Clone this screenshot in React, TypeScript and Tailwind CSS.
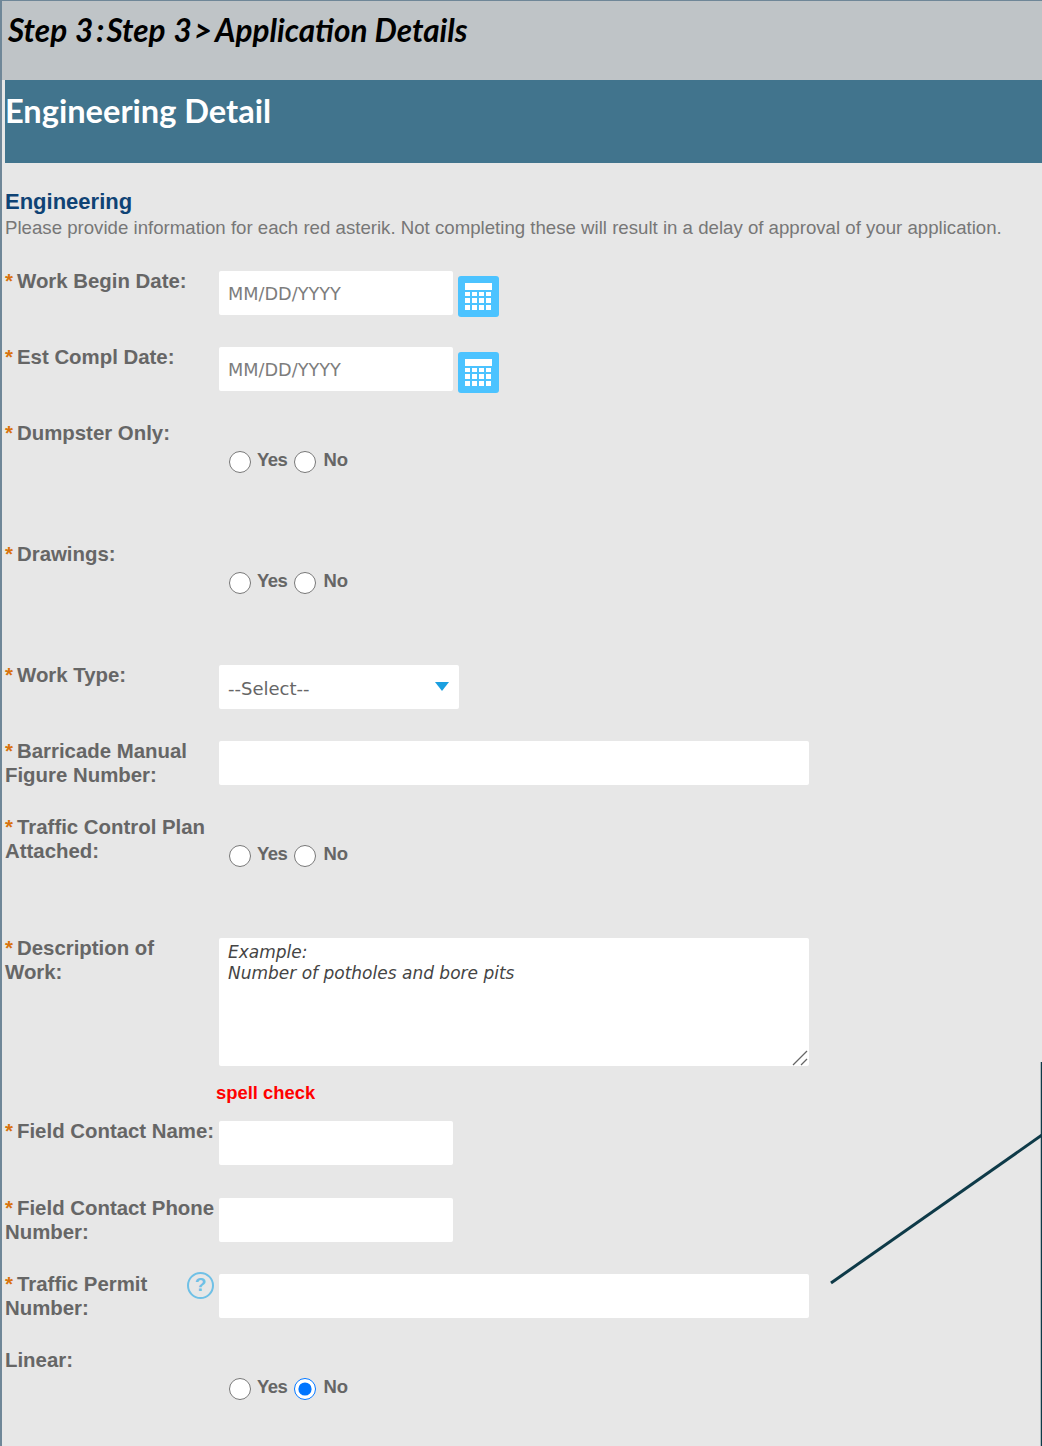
import React from 'react'

const labelFont = "font-['Liberation_Sans',Arial,sans-serif]"
const headFont = "font-['Lato',sans-serif]"
const inputFont = "font-['DejaVu_Sans',Verdana,sans-serif]"

function Label({ text, required = true }: { text: string; required?: boolean }) {
  return (
    <label className={`-mb-[2px] -mt-[2px] block w-[214px] shrink-0 pr-[3px] text-[20.4px] leading-[24px] font-bold text-[#666666] ${labelFont}`}>
      {required && <span className="mr-[1px] inline-block w-[11px] text-[#d9730d]">*</span>}
      {text}
    </label>
  )
}

function CalendarButton() {
  return (
    <button className="ml-[5px] mt-[5px] -mb-[2px] flex h-[41px] w-[41px] items-center justify-center rounded-[3px] bg-[#4cc3ff]">
      <svg width="27" height="28" viewBox="0 0 27 28" fill="#ffffff">
        <rect x="0" y="0" width="27" height="7" />
        <rect x="0" y="9" width="5" height="4" />
        <rect x="7" y="9" width="5" height="4" />
        <rect x="14" y="9" width="5" height="4" />
        <rect x="21" y="9" width="5" height="4" />
        <rect x="0" y="15" width="5" height="5" />
        <rect x="7" y="15" width="5" height="5" />
        <rect x="14" y="15" width="5" height="5" />
        <rect x="21" y="15" width="5" height="5" />
        <rect x="0" y="22" width="5" height="5" />
        <rect x="7" y="22" width="5" height="5" />
        <rect x="14" y="22" width="5" height="5" />
        <rect x="21" y="22" width="5" height="5" />
      </svg>
    </button>
  )
}

function TextBox({ wide, placeholder }: { wide?: boolean; placeholder?: string }) {
  return (
    <input
      readOnly
      placeholder={placeholder}
      className={`h-[44px] rounded-[2px] bg-white px-[9px] pt-[1px] text-[17.7px] text-[#666666] placeholder:text-[#7d7d7d] outline-none ${inputFont} ${wide ? 'w-[590px]' : 'w-[234px]'}`}
    />
  )
}

function DateRow({ label }: { label: string }) {
  return (
    <div className="mb-[32px] flex">
      <Label text={label} />
      <TextBox placeholder="MM/DD/YYYY" />
      <CalendarButton />
    </div>
  )
}

function RadioRow({ label, name, checked, required = true }: { label: string; name: string; checked?: boolean; required?: boolean }) {
  return (
    <div className="flex h-[121px]">
      <Label text={label} required={required} />
      <div className="mt-[12px] flex h-[24px] items-center pl-[10px] pt-[27px]">
        <input type="radio" name={name} readOnly className="m-0 h-[22px] w-[22px]" />
        <span className={`-mt-[5px] ml-[6px] text-[18.5px] font-bold tracking-[-0.5px] text-[#666666] ${labelFont}`}>Yes</span>
        <input type="radio" name={name} readOnly checked={!!checked} className="m-0 ml-[7px] h-[22px] w-[22px]" />
        <span className={`-mt-[5px] ml-[7px] text-[18.5px] font-bold text-[#666666] ${labelFont}`}>No</span>
      </div>
    </div>
  )
}

function InputRow({ label, wide, gap = 'mb-[32px]' }: { label: string; wide?: boolean; gap?: string }) {
  return (
    <div className={`flex ${gap}`}>
      <Label text={label} />
      <TextBox wide={wide} />
    </div>
  )
}

export default function App() {
  return (
    <div className="relative h-[1446px] w-[1042px] overflow-hidden border-l-2 border-t border-[#6f8798] bg-[#e7e7e7]">
      <div className="flex h-[79px] items-start bg-[#bfc4c7] pl-[6px] pt-[10px]">
        <h1 className={`text-[31.5px] leading-[38px] font-bold italic whitespace-nowrap text-black ${headFont}`}>
          <span className="[word-spacing:1px]">Step 3</span>
          <span className="ml-[3px] mr-[2px]">:</span>
          <span className="[word-spacing:1px]">Step 3</span>
          <span className="ml-[2px] mr-[3px]">&gt;</span>
          Application Details
        </h1>
      </div>

      <div className="ml-[3px] h-[83px] bg-[#41748d] pt-[12px]">
        <h2 className={`text-[32.6px] leading-[38px] font-bold text-white ${headFont}`}>Engineering Detail</h2>
      </div>

      <div className="pl-[3px]">
        <h3 className={`mt-[26px] text-[22px] leading-[26px] font-bold text-[#0f4375] ${labelFont}`}>Engineering</h3>
        <p className={`mb-[31px] mt-[1px] text-[18.65px] leading-[24px] whitespace-nowrap text-[#777777] ${labelFont}`}>
          Please provide information for each red asterik. Not completing these will result in a delay of approval of your application.
        </p>

        <DateRow label="Work Begin Date:" />
        <DateRow label="Est Compl Date:" />
        <RadioRow label="Dumpster Only:" name="dumpster" />
        <RadioRow label="Drawings:" name="drawings" />

        <div className="mb-[32px] flex">
          <Label text="Work Type:" />
          <div className={`relative flex h-[44px] w-[240px] items-center rounded-[2px] bg-white px-[9px] pt-[2px] text-[18px] text-[#666666] ${inputFont}`}>
            --Select--
            <span className="absolute right-[10px] top-[17px] h-0 w-0 border-x-[7px] border-t-[9px] border-x-transparent border-t-[#1a9fe0]" />
          </div>
        </div>

        <InputRow label="Barricade Manual Figure Number:" wide />
        <RadioRow label="Traffic Control Plan Attached:" name="traffic" />

        <div className="flex">
          <Label text="Description of Work:" />
          <div className="relative">
            <textarea
              readOnly
              placeholder={'Example:\nNumber of potholes and bore pits'}
              className={`block h-[128px] w-[590px] resize-none rounded-[2px] bg-white px-[9px] pt-[4px] text-[17px] leading-[21px] italic text-[#444444] placeholder:text-[#444444] outline-none ${inputFont}`}
            />
            <svg className="absolute bottom-0 right-[1px]" width="16" height="16" fill="none" stroke="#666666" strokeWidth="1.2">
              <path d="M1 15L15 1" />
              <path d="M9 15L15 9" />
            </svg>
          </div>
        </div>
        <div className={`mb-[16px] ml-[211px] mt-[15px] h-[24px] text-[18.4px] leading-[24px] font-bold text-[#ff0000] ${labelFont}`}>spell check</div>

        <InputRow label="Field Contact Name:" gap="mb-[33px]" />
        <InputRow label="Field Contact Phone Number:" />

        <div className="mb-[32px] flex">
          <div className="relative">
            <Label text="Traffic Permit Number:" />
            <span className={`absolute left-[182px] top-[-2px] flex h-[27px] w-[27px] items-center justify-center rounded-full border-2 border-[#6fc0e6] text-[19px] font-bold text-[#6fc0e6] ${labelFont}`}>?</span>
          </div>
          <TextBox wide />
        </div>

        <RadioRow label="Linear:" name="linear" required={false} checked />
      </div>

      <svg className="absolute left-[-2px] top-[-1px]" width="1042" height="1446" fill="none">
        <path d="M1041.5 1062V1446" stroke="#0e3a48" strokeWidth="1.5" />
        <path d="M831 1283L1042 1135" stroke="#0e3a48" strokeWidth="3" />
      </svg>
    </div>
  )
}
